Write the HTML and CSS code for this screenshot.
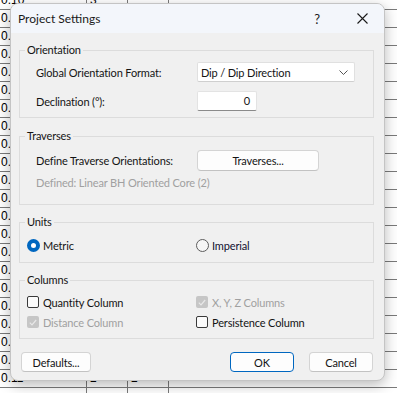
FILE: index.html
```html
<!DOCTYPE html>
<html>
<head>
<meta charset="utf-8">
<link rel="stylesheet" href="styles.css">
</head>
<body>
<div class="sheet">
  <div class="row"><span class="c c1">0.10</span><span class="c c2">3</span><span class="c c3"></span><span class="c c4"></span></div>
  <div class="row"><span class="c c1">0.10</span><span class="c c2"></span><span class="c c3"></span><span class="c c4"></span></div>
  <div class="row"><span class="c c1">0.10</span><span class="c c2"></span><span class="c c3"></span><span class="c c4"></span></div>
  <div class="row"><span class="c c1">0.10</span><span class="c c2"></span><span class="c c3"></span><span class="c c4"></span></div>
  <div class="row"><span class="c c1">0.10</span><span class="c c2"></span><span class="c c3"></span><span class="c c4"></span></div>
  <div class="row"><span class="c c1">0.10</span><span class="c c2"></span><span class="c c3"></span><span class="c c4"></span></div>
  <div class="row"><span class="c c1">0.10</span><span class="c c2"></span><span class="c c3"></span><span class="c c4"></span></div>
  <div class="row"><span class="c c1">0.10</span><span class="c c2"></span><span class="c c3"></span><span class="c c4"></span></div>
  <div class="row"><span class="c c1">0.10</span><span class="c c2"></span><span class="c c3"></span><span class="c c4"></span></div>
  <div class="row"><span class="c c1">0.10</span><span class="c c2"></span><span class="c c3"></span><span class="c c4"></span></div>
  <div class="row"><span class="c c1">0.10</span><span class="c c2"></span><span class="c c3"></span><span class="c c4"></span></div>
  <div class="row"><span class="c c1">0.10</span><span class="c c2"></span><span class="c c3"></span><span class="c c4"></span></div>
  <div class="row"><span class="c c1">0.10</span><span class="c c2"></span><span class="c c3"></span><span class="c c4"></span></div>
  <div class="row"><span class="c c1">0.10</span><span class="c c2"></span><span class="c c3"></span><span class="c c4"></span></div>
  <div class="row"><span class="c c1">0.10</span><span class="c c2"></span><span class="c c3"></span><span class="c c4"></span></div>
  <div class="row"><span class="c c1">0.10</span><span class="c c2"></span><span class="c c3"></span><span class="c c4"></span></div>
  <div class="row"><span class="c c1">0.10</span><span class="c c2"></span><span class="c c3"></span><span class="c c4"></span></div>
  <div class="row"><span class="c c1">0.10</span><span class="c c2"></span><span class="c c3"></span><span class="c c4"></span></div>
  <div class="row"><span class="c c1">0.10</span><span class="c c2"></span><span class="c c3"></span><span class="c c4"></span></div>
  <div class="row"><span class="c c1">0.10</span><span class="c c2"></span><span class="c c3"></span><span class="c c4"></span></div>
  <div class="row"><span class="c c1">0.10</span><span class="c c2"></span><span class="c c3"></span><span class="c c4"></span></div>
  <div class="row"><span class="c c1">0.11</span><span class="c c2">2</span><span class="c c3">2</span><span class="c c4"></span></div>
  <div class="row"><span class="c c1"></span><span class="c c2"></span><span class="c c3"></span><span class="c c4"></span></div>
</div>

<div class="dialog">
  <div class="titlebar">
    <span class="title">Project Settings</span>
    <span class="help">?</span>
    <span class="close"><svg width="11" height="11" viewBox="0 0 11 11"><path d="M0.5 0.5 L10.5 10.5 M10.5 0.5 L0.5 10.5" stroke="#1a1a1a" stroke-width="1.1" fill="none"/></svg></span>
  </div>
  <div class="body">
    <fieldset class="group">
      <legend>Orientation</legend>
      <div class="gbody g-orient">
        <div class="frow">
          <span class="lbl">Global Orientation Format:</span>
          <div class="select"><span>Dip / Dip Direction</span><svg width="9" height="5" viewBox="0 0 9 5"><path d="M0.5 0.5 L4.5 4.5 L8.5 0.5" stroke="#555" stroke-width="1" fill="none"/></svg></div>
        </div>
        <div class="frow frow2">
          <span class="lbl">Declination (°):</span>
          <div class="input">0</div>
        </div>
      </div>
    </fieldset>

    <fieldset class="group gap10">
      <legend>Traverses</legend>
      <div class="gbody g-trav">
        <div class="frow">
          <span class="lbl">Define Traverse Orientations:</span>
          <div class="btn btn-trav">Traverses...</div>
        </div>
        <div class="note">Defined: Linear BH Oriented Core (2)</div>
      </div>
    </fieldset>

    <fieldset class="group gap9">
      <legend>Units</legend>
      <div class="gbody g-units">
        <div class="grid">
          <label class="opt"><span class="radio on"></span>Metric</label>
          <label class="opt"><span class="radio"></span><span class="imperial">Imperial</span></label>
        </div>
      </div>
    </fieldset>

    <fieldset class="group gap9">
      <legend>Columns</legend>
      <div class="gbody g-cols">
        <div class="grid">
          <label class="opt"><span class="check"></span>Quantity Column</label>
          <label class="opt dis"><span class="check checked-dis"><svg width="8" height="7" viewBox="0 0 8 7"><path d="M0.8 3.6 L3 5.8 L7.2 1" stroke="#e8e8e8" stroke-width="1.2" fill="none"/></svg></span>X, Y, Z Columns</label>
          <label class="opt dis"><span class="check checked-dis"><svg width="8" height="7" viewBox="0 0 8 7"><path d="M0.8 3.6 L3 5.8 L7.2 1" stroke="#e8e8e8" stroke-width="1.2" fill="none"/></svg></span>Distance Column</label>
          <label class="opt"><span class="check"></span>Persistence Column</label>
        </div>
      </div>
    </fieldset>

    <div class="footer">
      <div class="btn btn-def">Defaults...</div>
      <div class="spacer"></div>
      <div class="btn btn-ok">OK</div>
      <div class="btn btn-cancel">Cancel</div>
    </div>
  </div>
</div>
</body>
</html>
```

FILE: styles.css
```css
* { box-sizing: border-box; }
html, body { margin: 0; padding: 0; }
body {
  width: 397px;
  height: 393px;
  overflow: hidden;
  position: relative;
  background: #ffffff;
  font-family: "Lato", "Noto Sans", sans-serif;
  font-size: 11px;
  letter-spacing: -0.15px;
  color: #141414;
}

/* background spreadsheet */
.sheet {
  margin-top: -8px;
  display: flex;
  flex-direction: column;
  font-family: "Liberation Sans", Arial, sans-serif;
  font-size: 12px;
  letter-spacing: 0;
  color: #000;
}
.row {
  display: flex;
  height: 18px;
  border-bottom: 1px solid #7a7a7a;
}
.c {
  height: 17px;
  line-height: 17px;
  padding-left: 1px;
  border-right: 1px solid #7a7a7a;
  white-space: nowrap;
  overflow: hidden;
}
.c1 { width: 87px; }
.c2 { width: 41px; padding-left: 3px; }
.c3 { width: 41px; padding-left: 3px; }
.c4 { width: 140px; border-right: none; }

/* dialog */
.dialog {
  position: absolute;
  left: 10px;
  top: 3px;
  width: 375px;
  height: 378px;
  background: #f0f0f0;
  border: 1px solid #c4c4c4;
  border-radius: 8px;
  box-shadow: 0 4px 14px rgba(0, 0, 0, 0.28);
  overflow: hidden;
  display: flex;
  flex-direction: column;
}
.titlebar {
  height: 29px;
  background: #f3f6fb;
  display: flex;
  align-items: center;
  padding-left: 7px;
  flex-shrink: 0;
}
.title { flex: 1; font-size: 12px; letter-spacing: 0; color: #1a1a1a; }
.help {
  width: 14px;
  text-align: center;
  font-size: 13px;
  margin-right: 33px;
  color: #1a1a1a;
}
.close {
  width: 11px;
  height: 11px;
  display: flex;
  margin-right: 16px;
}

.body {
  padding: 9px 10px 0 8px;
  display: flex;
  flex-direction: column;
}

.group {
  margin: 0;
  padding: 0;
  border: 1px solid #dcdcdc;
  min-width: 0;
}
.gap10 { margin-top: 10px; }
.gap9 { margin-top: 9px; }
.group legend {
  margin-left: 5px;
  padding: 0 2px;
  height: 16px;
  line-height: 16px;
}

.g-orient { padding: 4px 18px 6px 16px; }
.g-trav { padding: 6px 18px 13px 16px; }
.g-units { padding: 7px 8px 9px 7px; }
.g-cols { padding: 6px 8px 8px 7px; }

.frow {
  display: flex;
  align-items: center;
  height: 20px;
}
.frow2 { margin-top: 9px; }
.lbl { width: 161px; flex-shrink: 0; white-space: nowrap; }

.select {
  width: 158px;
  height: 20px;
  background: #fff;
  border: 1px solid #e0e0e0;
  border-bottom-color: #cfcfcf;
  border-radius: 2px;
  display: flex;
  align-items: center;
  justify-content: space-between;
  padding: 0 5px 0 3px;
}
.select svg { margin-right: 1px; }

.input {
  width: 60px;
  height: 20px;
  background: #fff;
  border: 1px solid #e3e3e3;
  border-bottom: 1px solid #8a8a8a;
  border-radius: 2px;
  text-align: right;
  padding-right: 6px;
  line-height: 18px;
}

.btn {
  height: 20px;
  background: #fdfdfd;
  border: 1px solid #d4d4d4;
  border-bottom-color: #c2c2c2;
  border-radius: 4px;
  display: flex;
  align-items: center;
  justify-content: center;
}
.btn-trav { width: 122px; height: 21px; }

.note {
  margin-top: 5px;
  height: 16px;
  line-height: 16px;
  color: #a0a0a0;
  white-space: nowrap;
}

.grid {
  display: grid;
  grid-template-columns: 169px 1fr;
  row-gap: 4px;
}
.opt {
  display: flex;
  align-items: center;
  height: 16px;
  white-space: nowrap;
}
.opt.dis { color: #a0a0a0; }

.radio {
  width: 13px;
  height: 13px;
  border-radius: 50%;
  border: 1px solid #5c5c5c;
  background: #f6f6f6;
  margin-right: 3px;
  flex-shrink: 0;
}
.radio.on {
  border: 4px solid #0067c0;
  background: #fff;
}
.imperial { color: #101030; }

.check {
  width: 12px;
  height: 12px;
  border: 1px solid #3a3a3a;
  border-radius: 2px;
  background: #fbfbfb;
  margin-right: 4px;
  flex-shrink: 0;
  display: flex;
  align-items: center;
  justify-content: center;
}
.check.checked-dis {
  border: none;
  background: #c6c6c6;
}

.footer {
  margin-top: 13px;
  display: flex;
  padding: 0 1px 0 2px;
}
.spacer { flex: 1; }
.btn-def { width: 70px; }
.btn-ok { width: 64px; border: 1px solid #0067c0; }
.btn-cancel { width: 64px; margin-left: 15px; }
```
